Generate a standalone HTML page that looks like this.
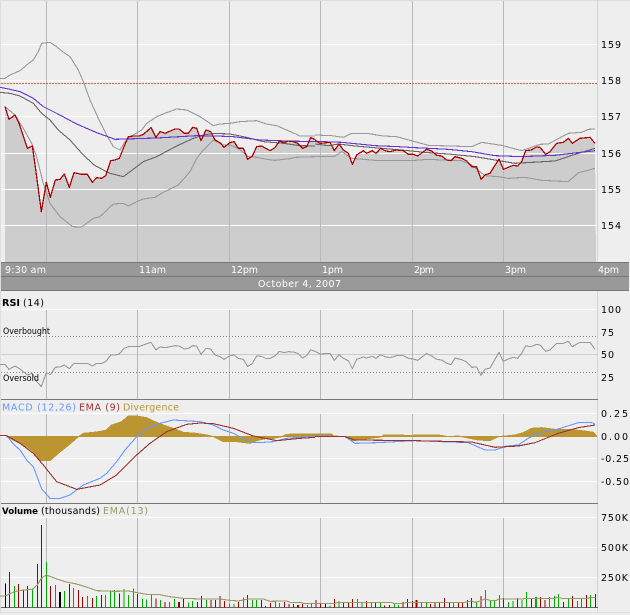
<!DOCTYPE html>
<html><head><meta charset="utf-8"><style>
html,body{margin:0;padding:0;background:#eee;width:630px;height:615px;overflow:hidden}
svg{display:block}
text{font-family:"DejaVu Sans","Liberation Sans",sans-serif;font-size:9.5px;fill:#000}
.w{fill:#fff}
.l{fill:none;stroke-linejoin:round}
polyline,polygon{shape-rendering:crispEdges}
</style></head><body>
<svg width="630" height="615" viewBox="0 0 630 615" xmlns="http://www.w3.org/2000/svg">
<rect width="630" height="615" fill="#eee"/>
<rect x="0" y="0" width="630" height="1" fill="#ddd"/>
<rect x="0" y="0" width="1" height="613" fill="#ddd"/>
<rect x="597" y="0" width="1" height="612" fill="#d4d4d4"/>
<rect x="0" y="612" width="630" height="1" fill="#ddd"/>
<!-- area -->
<g transform="scale(.33333)" fill="#cdcdcd">
<polygon points="15,320 27,358 45,345 57,370 82,445 97,438 110,530 124,635 139,547 151,592 166,540 180,538 193,522 208,562 222,518 245,523 262,523 277,547 290,533 305,535 317,527 332,482 345,480 358,475 372,440 385,410 400,408 418,408 430,403 453,383 468,412 480,395 495,400 525,387 537,387 553,400 565,400 578,382 590,385 603,422 618,390 632,395 645,420 660,428 672,442 690,428 702,425 715,445 730,445 743,478 757,468 770,440 785,438 797,445 810,452 825,443 838,423 852,428 865,423 880,425 893,430 908,445 920,440 932,413 945,418 945,786 15,786"/>
</g>
<g transform="translate(315,0) scale(.33333)" fill="#cdcdcd">
<polygon points="0,420 15,430 45,427 58,452 72,432 85,450 100,460 112,493 125,465 145,452 155,460 172,452 183,460 197,445 210,452 225,455 245,450 265,452 280,463 295,463 308,468 335,448 350,453 365,466 380,468 395,480 408,482 420,470 440,475 455,483 470,500 485,500 498,538 510,525 525,520 552,477 565,508 585,500 595,496 608,498 620,485 632,452 648,450 665,441 675,442 692,463 705,455 725,430 745,427 760,415 772,430 795,415 825,412 840,430 843,786 0,786"/>
</g>
<!-- grid panels -->
<g fill="#fff">
<rect x="1" y="44" width="596" height="1"/><rect x="1" y="80" width="596" height="1"/><rect x="1" y="116" width="596" height="1"/><rect x="1" y="153" width="596" height="1"/><rect x="1" y="189" width="596" height="1"/><rect x="1" y="225" width="596" height="1"/>
<rect x="1" y="309" width="596" height="1"/>
<rect x="1" y="413" width="596" height="1"/><rect x="1" y="436" width="596" height="1"/><rect x="1" y="458" width="596" height="1"/><rect x="1" y="481" width="596" height="1"/>
<rect x="1" y="517" width="596" height="1"/><rect x="1" y="547" width="596" height="1"/><rect x="1" y="577" width="596" height="1"/>
</g>
<rect x="1" y="354" width="596" height="1" fill="#ccc"/>
<g stroke="#b8b8b8" stroke-width="1" shape-rendering="crispEdges">
<path d="M46.5 1V262M137.5 1V262M229.5 1V262M320.5 1V262M412.5 1V262M503.5 1V262"/>
<path d="M46.5 310V399M137.5 310V399M229.5 310V399M320.5 310V399M412.5 310V399M503.5 310V399"/>
<path d="M46.5 414V503M137.5 414V503M229.5 414V503M320.5 414V503M412.5 414V503M503.5 414V503"/>
<path d="M46.5 518V607M137.5 518V607M229.5 518V607M320.5 518V607M412.5 518V607M503.5 518V607"/>
</g>
<path d="M1 83.500H597" stroke="#cc6633" stroke-width="1" stroke-dasharray="2 1" fill="none" shape-rendering="crispEdges"/>
<path d="M1 336.500H597M1 372.500H597" stroke="#888" stroke-width="1" stroke-dasharray="1 2" fill="none" shape-rendering="crispEdges"/>
<!-- dividers -->
<rect x="1" y="399" width="597" height="1" fill="#777"/>
<rect x="1" y="503" width="597" height="1" fill="#777"/>
<rect x="1" y="607" width="597" height="1" fill="#666"/>
<!-- header bars -->
<rect x="1" y="262" width="628" height="29" fill="#999"/>
<rect x="1" y="262" width="628" height="1" fill="#777"/>
<rect x="1" y="276" width="628" height="1" fill="#777"/>
<rect x="1" y="290" width="628" height="1" fill="#777"/>
<!-- price lines -->
<g transform="scale(.33333)" class="l" stroke-width="3.3" fill="none">
<polyline stroke="#999" points="0,235 15,235 30,225 60,212 80,195 100,180 115,155 125,130 150,127 170,140 185,153 210,170 235,210 250,245 270,300 295,355 320,405 340,440 360,450 375,425 400,405 425,390 440,370 470,350 500,338 530,327 560,330 600,350 640,377 660,372 690,370 720,365 770,362 800,372 830,377 860,390 900,408 945,408"/>
<polyline stroke="#999" points="15,320 45,345 70,385 95,430 110,470 130,550 150,610 180,650 218,680 245,681 280,655 300,650 340,612 370,610 385,618 410,605 430,597 465,592 490,577 535,555 570,515 590,475 610,450 640,420 670,435 690,435 715,445 745,470 770,472 800,478 825,481 870,476 885,472 945,470"/>
<polyline stroke="#666" points="0,277 30,280 60,288 100,310 125,340 150,360 175,390 210,420 250,465 285,497 330,520 370,530 390,515 430,485 470,470 530,438 580,415 610,405 640,400 690,402 740,412 790,425 850,430 900,437 945,438"/>
<polyline stroke="#6633cc" points="0,262 30,268 60,275 100,295 130,320 170,340 230,372 290,398 345,418 470,414 590,407 650,408 700,410 780,420 860,423 945,425"/>
<polyline stroke="#aa0000" stroke-width="3.8" points="15,320 27,358 45,345 57,370 82,445 97,438 110,530 124,635 139,547 151,592 166,540 180,538 193,522 208,562 222,518 245,523 262,523 277,547 290,533 305,535 317,527 332,482 345,480 358,475 372,440 385,410 400,408 418,408 430,403 453,383 468,412 480,395 495,400 525,387 537,387 553,400 565,400 578,382 590,385 603,422 618,390 632,395 645,420 660,428 672,442 690,428 702,425 715,445 730,445 743,478 757,468 770,440 785,438 797,445 810,452 825,443 838,423 852,428 865,423 880,425 893,430 908,445 920,440 932,413 945,418"/>
</g>
<g transform="translate(315,0) scale(.33333)" class="l" stroke-width="3.3" fill="none">
<polyline stroke="#999" points="0,405 50,407 85,412 110,400 155,400 205,408 245,410 300,425 340,436 470,440 500,427 560,436 620,452 675,433 700,432 760,400 800,397 820,388 840,387"/>
<polyline stroke="#999" points="0,470 58,470 80,455 110,475 180,481 300,481 340,478 380,480 440,482 470,495 510,527 550,530 580,535 630,532 680,541 760,545 790,518 815,512 840,505"/>
<polyline stroke="#666" points="0,432 40,437 70,432 120,438 200,445 280,452 340,458 400,462 480,470 540,480 600,490 720,483 790,460 840,445"/>
<polyline stroke="#6633cc" points="0,424 80,427 130,432 180,437 250,440 300,443 400,448 470,455 540,467 620,470 720,466 770,460 840,452"/>
<polyline stroke="#aa0000" stroke-width="3.8" points="0,420 15,430 45,427 58,452 72,432 85,450 100,460 112,493 125,465 145,452 155,460 172,452 183,460 197,445 210,452 225,455 245,450 265,452 280,463 295,463 308,468 335,448 350,453 365,466 380,468 395,480 408,482 420,470 440,475 455,483 470,500 485,500 498,538 510,525 525,520 552,477 565,508 585,500 595,496 608,498 620,485 632,452 648,450 665,441 675,442 692,463 705,455 725,430 745,427 760,415 772,430 795,415 825,412 840,430"/>
</g>
<!-- RSI line -->
<g transform="translate(0,290) scale(.33333)" class="l" fill="none" stroke="#999" stroke-width="3.3">
<polyline points="0,223 15,223 27,238 45,228 57,235 82,255 97,250 110,275 124,290 139,248 151,254 166,232 180,231 193,225 208,236 222,220 245,220 262,220 277,228 290,220 305,220 317,215 332,195 345,195 358,192 372,175 385,170 418,169 430,165 453,157 468,180 480,171 495,173 525,167 537,168 553,177 565,175 578,167 590,168 603,193 618,175 632,177 645,195 660,200 672,208 690,197 702,195 715,205 730,208 743,230 757,220 770,198 785,199 797,205 810,205 825,198 838,184 852,188 865,185 880,186 893,190 908,204 920,197 932,179 945,184"/>
</g>
<g transform="translate(315,290) scale(.33333)" class="l" fill="none" stroke="#999" stroke-width="3.3">
<polyline points="0,184 15,192 45,190 58,211 72,194 85,205 100,212 112,236 125,208 145,201 155,204 172,199 183,205 197,194 210,200 225,203 245,197 265,197 280,205 295,207 308,211 335,190 350,198 365,208 380,210 395,220 408,224 420,204 440,209 455,216 470,232 485,231 498,256 510,238 525,234 552,187 565,214 585,205 595,202 608,205 620,190 632,168 648,170 665,163 675,165 692,184 705,180 725,160 745,160 760,154 772,170 795,157 825,157 840,178"/>
</g>
<!-- MACD -->
<g transform="translate(0,290) scale(.33333)" class="l" fill="none" stroke-width="3.3">
<polygon stroke="#bb9530" stroke-width="3" fill="#bb9530" points="20,440 50,455 80,470 100,485 120,512 150,512 175,490 210,462 235,440 250,430 290,426 320,420 335,405 365,395 385,378 410,378 440,383 465,395 490,405 520,415 550,427 590,430 625,436 640,440 670,455 710,455 750,460 770,452 800,445 820,445 845,440 860,433 900,432 945,432 945,440"/>
<polyline stroke="#6699ff" points="0,437 20,437 40,462 60,480 80,510 100,530 125,597 150,625 180,625 210,615 250,585 300,565 320,550 350,515 375,480 410,440 440,415 480,400 520,390 600,395 640,405 670,420 700,430 750,457 790,457 820,455 860,445 945,438"/>
<polyline stroke="#993333" points="0,437 20,437 60,460 100,490 130,525 170,575 230,598 300,585 350,555 410,495 450,460 500,425 560,403 600,399 640,401 700,415 760,438 830,452 900,445 945,442"/>
</g>
<g transform="translate(315,290) scale(.33333)" class="l" fill="none" stroke-width="3.3">
<polygon stroke="#bb9530" stroke-width="3" fill="#bb9530" points="0,440 0,432 50,432 55,438 90,440 110,453 150,447 190,442 200,440 205,435 285,436 330,435 370,435 400,440 430,438 450,442 490,450 525,452 550,440 600,435 625,428 650,415 680,413 720,418 760,418 810,423 835,427 845,438 845,440"/>
<polyline stroke="#6699ff" points="0,438 90,440 120,460 185,458 300,452 460,458 510,480 540,480 575,468 610,465 640,445 670,428 720,420 790,398 830,398 840,402"/>
<polyline stroke="#993333" points="0,440 90,440 120,450 300,452 470,456 540,472 610,468 660,458 730,430 790,413 840,405"/>
</g>
<!-- Volume -->
<g transform="translate(0,500) scale(.33333)" fill="none" stroke-width="3" shape-rendering="crispEdges">
<path stroke="#000" d="M16 322V250"/><path stroke="#000" stroke-width="6" d="M180 322V276"/>
<path stroke="#990000" d="M28 322V216M55 322V252M70 322V270M83 322V258M112 322V192M124 322V75M151 322V258M208 322V252M235 322V270M248 322V291M277 322V294M304 322V285M358 322V280M412 322V282M468 322V296M495 322V306M550 322V297M592 322V306M604 322V288M633 322V300M646 322V300M660 322V288M674 322V303M715 322V306M743 322V285M784 322V300M797 322V318M811 322V309M853 322V306M867 322V312M880 322V312M908 322V312"/>
<path stroke="#990000" stroke-width="6" d="M537 322V306M894 322V315"/>
<path stroke="#00aa00" d="M43 322V258M97 322V268M139 322V186M166 322V255M193 322V273M221 322V264M262 322V288M290 322V288M317 322V285M331 322V275M344 322V270M372 322V267M386 322V285M400 322V265M427 322V297M440 322V298M454 322V285M481 322V300M508 322V306M523 322V297M565 322V308M578 322V303M619 322V300M688 322V312M702 322V312M730 322V292M757 322V300M770 322V300M826 322V306M838 322V309M922 322V315M935 322V312"/>
</g>
<g transform="translate(315,500) scale(.33333)" fill="none" stroke-width="3" shape-rendering="crispEdges">
<path stroke="#000" d="M31 322V312"/>
<path stroke="#990000" d="M3 322V300M16 322V312M58 322V297M85 322V309M100 322V309M112 322V297M155 322V303M182 322V306M209 322V316M223 322V315M264 322V306M278 322V297M292 322V303M347 322V312M360 322V309M374 322V309M388 322V294M403 322V306M430 322V309M443 322V309M458 322V300M469 322V294M498 322V288M565 322V294M607 322V294M649 322V297M676 322V291M690 322V300M745 322V306M772 322V288M814 322V285M841 322V282"/>
<path stroke="#990000" stroke-width="6" d="M305 322V300"/>
<path stroke="#00aa00" d="M45 322V316M72 322V303M127 322V297M141 322V309M169 322V309M196 322V306M238 322V312M251 322V315M319 322V309M334 322V309M415 322V309M484 322V306M511 322V270M526 322V303M538 322V303M553 322V285M580 322V306M594 322V303M621 322V300M634 322V276M703 322V291M718 322V288M730 322V282M760 322V297M787 322V303M800 322V297M827 322V285"/>
<path stroke="#00aa00" stroke-width="6" d="M663 322V291"/>
</g>
<g transform="translate(0,500) scale(.33333)" class="l" fill="none" stroke="#999966" stroke-width="3.3">
<polyline points="0,288 15,288 43,275 70,270 97,268 112,255 124,235 139,225 165,235 195,245 230,252 262,262 290,272 345,274 385,273 412,278 440,283 475,283 510,290 550,295 604,297 660,297 690,301 715,303 745,297 790,297 810,304 860,303 870,307 900,307 910,310 945,310"/>
</g>
<g transform="translate(315,500) scale(.33333)" class="l" fill="none" stroke="#999966" stroke-width="3.3">
<polyline points="0,310 60,310 70,307 230,307 235,310 265,310 275,307 450,307 470,303 480,307 495,303 510,297 525,301 545,301 550,297 625,297 630,295 720,295 725,292 740,295 820,295 825,292 841,292"/>
</g>
<!-- axis text -->
<text class="w" x="5" y="273" textLength="41">9:30 am</text>
<text class="w" x="139" y="273" textLength="27">11am</text>
<text class="w" x="231" y="273" textLength="27">12pm</text>
<text class="w" x="322" y="273" textLength="21">1pm</text>
<text class="w" x="414" y="273" textLength="20">2pm</text>
<text class="w" x="505" y="273" textLength="21">3pm</text>
<text class="w" x="598" y="273" textLength="21">4pm</text>
<text class="w" x="258" y="287" textLength="83">October 4, 2007</text>
<text x="601" y="48" textLength="20">159</text>
<text x="601" y="84" textLength="20">158</text>
<text x="601" y="120" textLength="20">157</text>
<text x="601" y="157" textLength="20">156</text>
<text x="601" y="193" textLength="20">155</text>
<text x="601" y="229" textLength="20">154</text>
<text x="601" y="313" textLength="20">100</text>
<text x="601" y="336" textLength="13">75</text>
<text x="601" y="358" textLength="13">50</text>
<text x="601" y="381" textLength="13">25</text>
<text x="601" y="417" textLength="27">0.25</text>
<text x="601" y="440" textLength="27">0.00</text>
<text x="601" y="462" textLength="28">-0.25</text>
<text x="601" y="485" textLength="28">-0.50</text>
<text x="601" y="521" textLength="27">750K</text>
<text x="601" y="551" textLength="27">500K</text>
<text x="601" y="581" textLength="27">250K</text>
<!-- titles -->
<text x="2" y="306" font-weight="bold" textLength="18" lengthAdjust="spacingAndGlyphs">RSI</text>
<text x="23" y="306" textLength="21">(14)</text>
<text x="3" y="334" style="font-size:9px" textLength="47" lengthAdjust="spacingAndGlyphs">Overbought</text>
<text x="3" y="381" style="font-size:9px" textLength="36" lengthAdjust="spacingAndGlyphs">Oversold</text>
<text x="2" y="410.500" style="fill:#6699ff" textLength="74">MACD (12,26)</text>
<text x="79" y="410.500" style="fill:#993333" textLength="41">EMA (9)</text>
<text x="123" y="410.500" style="fill:#bb9530" textLength="56">Divergence</text>
<text x="2" y="514" style="font-size:9px" font-weight="bold" textLength="36" lengthAdjust="spacingAndGlyphs">Volume</text>
<text x="41" y="514" textLength="59">(thousands)</text>
<text x="103" y="514" style="fill:#999966" textLength="45">EMA(13)</text>
</svg>
</body></html>
